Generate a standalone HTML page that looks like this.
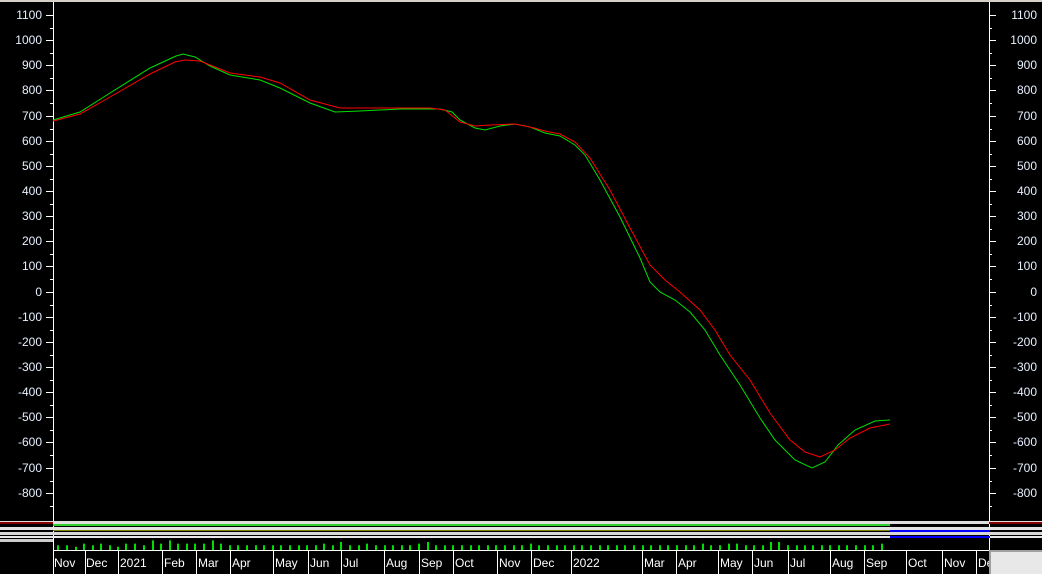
<!DOCTYPE html>
<html><head><style>
body{margin:0;width:1042px;height:574px;background:#000;overflow:hidden;font-family:"Liberation Sans",sans-serif;}
</style></head><body>
<svg width="1042" height="574" style="position:absolute;left:0;top:0">
<rect x="0" y="0" width="1042" height="574" fill="#000"/>
<rect x="0" y="0" width="1042" height="2" fill="#d4d0c8"/>
<line x1="53.5" y1="2" x2="53.5" y2="551" stroke="#fff"/>
<line x1="989.5" y1="2" x2="989.5" y2="551" stroke="#fff"/>
<g font-size="12" fill="#e8f0ff" text-anchor="end">
<text x="42" y="19">1100</text><text x="42" y="44">1000</text><text x="42" y="69">900</text><text x="42" y="94">800</text><text x="42" y="120">700</text><text x="42" y="145">600</text><text x="42" y="170">500</text><text x="42" y="195">400</text><text x="42" y="220">300</text><text x="42" y="245">200</text><text x="42" y="270">100</text><text x="42" y="296">0</text><text x="42" y="321">-100</text><text x="42" y="346">-200</text><text x="42" y="371">-300</text><text x="42" y="396">-400</text><text x="42" y="421">-500</text><text x="42" y="446">-600</text><text x="42" y="472">-700</text><text x="42" y="497">-800</text>
</g>
<g font-size="12" fill="#e8f0ff" text-anchor="end">
<text x="1037" y="19">1100</text><text x="1037" y="44">1000</text><text x="1037" y="69">900</text><text x="1037" y="94">800</text><text x="1037" y="120">700</text><text x="1037" y="145">600</text><text x="1037" y="170">500</text><text x="1037" y="195">400</text><text x="1037" y="220">300</text><text x="1037" y="245">200</text><text x="1037" y="270">100</text><text x="1037" y="296">0</text><text x="1037" y="321">-100</text><text x="1037" y="346">-200</text><text x="1037" y="371">-300</text><text x="1037" y="396">-400</text><text x="1037" y="421">-500</text><text x="1037" y="446">-600</text><text x="1037" y="472">-700</text><text x="1037" y="497">-800</text>
</g>
<g stroke="#fff">
<path d="M46 15.5h7M46 40.5h7M46 65.5h7M46 90.5h7M46 116.5h7M46 141.5h7M46 166.5h7M46 191.5h7M46 216.5h7M46 241.5h7M46 266.5h7M46 292.5h7M46 317.5h7M46 342.5h7M46 367.5h7M46 392.5h7M46 417.5h7M46 442.5h7M46 468.5h7M46 493.5h7"/>
<path d="M50 28.5h3M50 53.5h3M50 78.5h3M50 103.5h3M50 129.5h3M50 154.5h3M50 179.5h3M50 204.5h3M50 229.5h3M50 254.5h3M50 279.5h3M50 305.5h3M50 330.5h3M50 355.5h3M50 380.5h3M50 405.5h3M50 430.5h3M50 455.5h3M50 481.5h3M50 506.5h3"/>
<path d="M989 15.5h7M989 40.5h7M989 65.5h7M989 90.5h7M989 116.5h7M989 141.5h7M989 166.5h7M989 191.5h7M989 216.5h7M989 241.5h7M989 266.5h7M989 292.5h7M989 317.5h7M989 342.5h7M989 367.5h7M989 392.5h7M989 417.5h7M989 442.5h7M989 468.5h7M989 493.5h7"/>
<path d="M989 28.5h3M989 53.5h3M989 78.5h3M989 103.5h3M989 129.5h3M989 154.5h3M989 179.5h3M989 204.5h3M989 229.5h3M989 254.5h3M989 279.5h3M989 305.5h3M989 330.5h3M989 355.5h3M989 380.5h3M989 405.5h3M989 430.5h3M989 455.5h3M989 481.5h3M989 506.5h3"/>
</g>
<polyline fill="none" stroke="#00e000" stroke-width="1" points="53,120 80,112 110,93 150,68 176,56 183,54 195,57 210,66 230,75 260,80 280,88 310,103 335,112 360,111 400,109 440,109 452,112 460,120 475,128 485,130 500,126 515,124 530,127 545,133 560,136 575,145 585,155 600,180 620,217 640,258 650,282 660,292 675,300 690,312 705,330 720,355 740,385 760,418 775,440 795,460 812,468 825,462 838,445 855,430 875,421 890,420"/>
<polyline fill="none" stroke="#ff0000" stroke-width="1" points="53,121 80,114 110,97 150,74 175,62 185,60 200,61 215,67 230,73 260,77 280,83 310,100 340,108 400,108 430,108 445,110 460,122 475,126 490,125 515,124 530,127 545,131 560,134 575,142 590,158 610,190 630,228 650,265 665,280 680,292 700,310 715,330 730,355 750,380 770,413 790,440 805,452 820,457 835,450 850,438 870,428 890,424"/>
<rect x="0" y="521" width="1042" height="3" fill="#ddd"/>
<rect x="53" y="524" width="837" height="2" fill="#30d030"/>
<rect x="0" y="527" width="1042" height="3" fill="#e4e4e4"/>
<rect x="53" y="530" width="837" height="1" fill="#808000"/>
<rect x="890" y="530" width="100" height="2" fill="#0000ff"/>
<rect x="0" y="532" width="1042" height="3" fill="#d8d8d8"/>
<rect x="0" y="536" width="1042" height="2" fill="#e8e8e8"/>
<rect x="890" y="536" width="100" height="2" fill="#0000ff"/>
<rect x="0" y="539" width="53" height="3" fill="#ccc"/>
<rect x="0" y="522" width="53" height="2" fill="#800"/>
<rect x="989" y="522" width="53" height="2" fill="#800"/>
<g stroke="#00e000" stroke-width="2" transform="translate(0,550) scale(1,1.6) translate(0,-550)">
<path d="M58 550v-3M67 550v-3M76 550v-2M84 550v-4M93 550v-3M101 550v-4M110 550v-3M118 550v-2M126 550v-4M135 550v-4M144 550v-3M153 550v-6M161 550v-4M170 550v-6M178 550v-4M187 550v-4M195 550v-4M204 550v-4M213 550v-6M221 550v-4M230 550v-3M238 550v-3M247 550v-3M256 550v-3M264 550v-3M273 550v-3M281 550v-3M290 550v-3M299 550v-3M307 550v-3M316 550v-3M324 550v-4M333 550v-3M341 550v-5M350 550v-3M359 550v-3M367 550v-4M376 550v-3M385 550v-3M393 550v-3M402 550v-3M410 550v-3M419 550v-4M428 550v-5M436 550v-3M445 550v-3M453 550v-3M462 550v-3M471 550v-3M479 550v-3M488 550v-3M496 550v-3M505 550v-3M514 550v-3M522 550v-3M531 550v-4M539 550v-3M548 550v-3M557 550v-3M565 550v-3M574 550v-3M582 550v-3M591 550v-3M600 550v-3M608 550v-3M617 550v-3M625 550v-3M634 550v-3M643 550v-3M651 550v-3M660 550v-3M668 550v-3M677 550v-3M686 550v-3M694 550v-3M703 550v-4M711 550v-3M720 550v-3M729 550v-4M737 550v-4M746 550v-3M754 550v-3M763 550v-3M771 550v-5M779 550v-5M788 550v-3M797 550v-3M805 550v-3M813 550v-3M822 550v-3M830 550v-3M839 550v-3M847 550v-3M856 550v-3M865 550v-3M873 550v-3M882 550v-4"/>
</g>
<rect x="53" y="550" width="936" height="1" fill="#fff"/>
<g stroke="#fff">
<path d="M53.5 551v23M85.5 551v23M118.5 551v23M162.5 551v23M196.5 551v23M230.5 551v23M273.5 551v23M308.5 551v23M341.5 551v23M384.5 551v23M419.5 551v23M453.5 551v23M497.5 551v23M531.5 551v23M571.5 551v23M642.5 551v23M676.5 551v23M718.5 551v23M752.5 551v23M788.5 551v23M830.5 551v23M864.5 551v23M906.5 551v23M942.5 551v23M976.5 551v23"/>
</g>
<g font-size="12" fill="#fff">
<text x="54" y="567">Nov</text><text x="86" y="567">Dec</text><text x="120" y="567">2021</text><text x="164" y="567">Feb</text><text x="198" y="567">Mar</text><text x="232" y="567">Apr</text><text x="275" y="567">May</text><text x="310" y="567">Jun</text><text x="343" y="567">Jul</text><text x="386" y="567">Aug</text><text x="421" y="567">Sep</text><text x="455" y="567">Oct</text><text x="499" y="567">Nov</text><text x="533" y="567">Dec</text><text x="573" y="567">2022</text><text x="644" y="567">Mar</text><text x="678" y="567">Apr</text><text x="720" y="567">May</text><text x="754" y="567">Jun</text><text x="790" y="567">Jul</text><text x="832" y="567">Aug</text><text x="866" y="567">Sep</text><text x="908" y="567">Oct</text><text x="944" y="567">Nov</text><text x="978" y="567">Dec</text>
</g>
<rect x="989" y="550" width="53" height="24" fill="#a0a0a0"/>
<rect x="991" y="552" width="51" height="22" fill="#e8e8e8"/>
</svg>
</body></html>
